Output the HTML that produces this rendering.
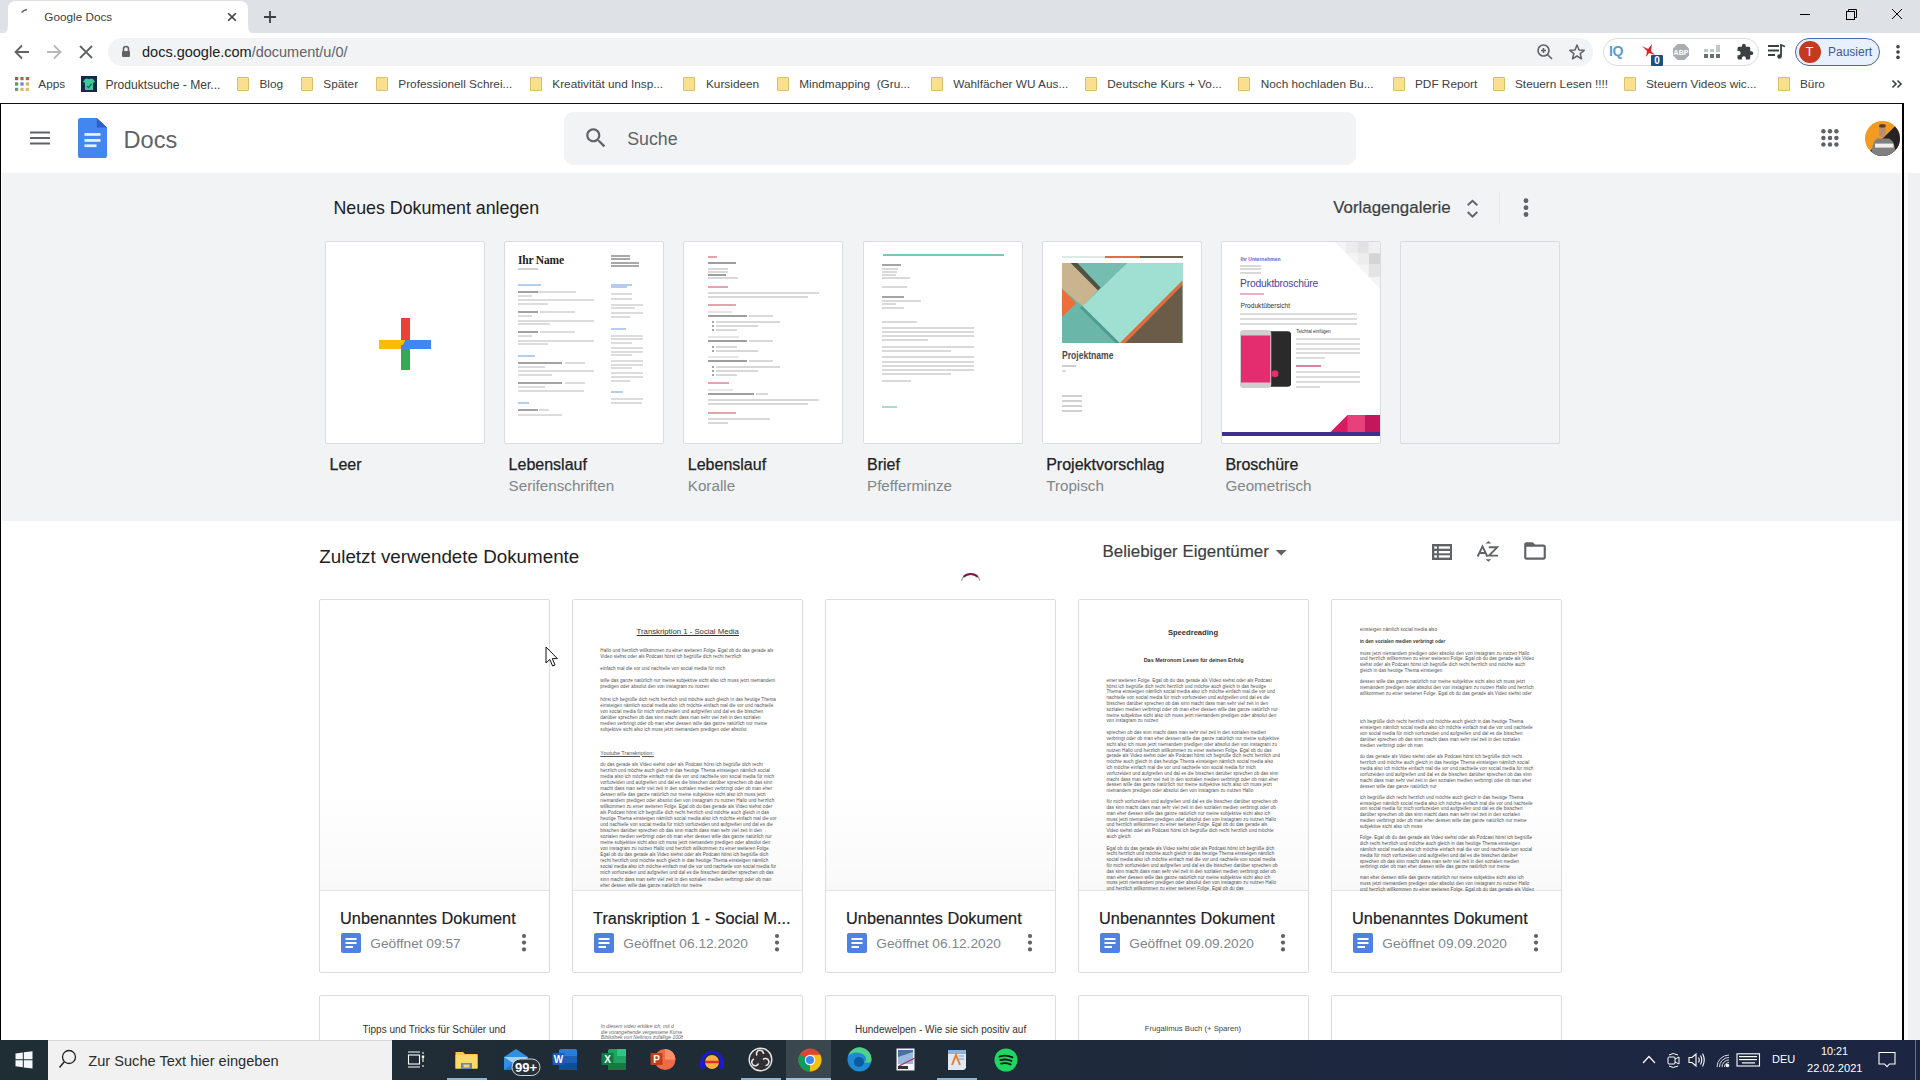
<!DOCTYPE html>
<html><head><meta charset="utf-8">
<style>
*{margin:0;padding:0;box-sizing:border-box}
html,body{width:1920px;height:1080px;overflow:hidden;background:#fff;font-family:"Liberation Sans",sans-serif;position:relative}
.a{position:absolute}
.t{position:absolute;white-space:nowrap;line-height:1}
#tabbar{left:0;top:0;width:1920px;height:33px;background:#dee1e6}
#tab{left:8px;top:0px;width:240px;height:34px;background:#fff;border-radius:8px 8px 0 0}
#toolbar{left:0;top:33px;width:1920px;height:36px;background:#fff}
#omni{left:108px;top:38px;width:1485px;height:28px;background:#f1f3f4;border-radius:14px}
#bmbar{left:0;top:69px;width:1920px;height:34px;background:#fff}
.bm{color:#3c4043;font-size:11.8px;top:78.7px}
.fold{position:absolute;top:77px;width:12px;height:14px;background:#f9e08f;border:1px solid #d9bf68;border-radius:1px}
#frame{left:0;top:102.6px;width:1904px;height:938px;border-top:1.4px solid #111;border-left:1px solid #000;border-right:2px solid #000;background:#fff}
#scroll{left:1904px;top:173px;width:16px;height:867px;background:#eff1f3;border-left:4px solid #fbfbfb}
#gray{left:2px;top:173px;width:1899px;height:348px;background:#f1f3f4}
.tc{position:absolute;top:241px;width:160px;height:203px;background:#fff;border:1px solid #dadce0;border-radius:2px;overflow:hidden}
.tt{font-size:16px;color:#202124;top:457.2px;-webkit-text-stroke:0.25px #202124}
.ts{font-size:15.2px;color:#80868b;top:478px}
.dc{position:absolute;top:599px;width:231px;height:374px;background:#fff;border:1px solid #dadce0;border-radius:2px;overflow:hidden}
.dc2{position:absolute;top:995px;width:231px;height:60px;background:#fff;border:1px solid #dadce0;border-radius:2px;overflow:hidden}
#taskbar{left:0;top:1040px;width:1920px;height:40px;background:linear-gradient(90deg,#1d2a33 0%,#1d2935 40%,#1c2540 100%)}
.dtt{font-size:16.3px;color:#202124;top:910.3px;-webkit-text-stroke:0.2px #202124}
.dts{font-size:13.7px;color:#80868b;top:937.4px}
</style></head><body>
<div id="tabbar" class="a"></div>
<svg class="a" style="left:0;top:0" width="260" height="34" viewBox="0 0 260 34"><path d="M0 34 Q8 34 8 26 V9 Q8 1 16 1 H240 Q248 1 248 9 V26 Q248 34 256 34 Z" fill="#fff"/></svg>
<div class="t" style="left:44.3px;top:11.3px;font-size:11.75px;color:#3c4043">Google Docs</div>
<div id="toolbar" class="a"></div>
<div id="omni" class="a"></div>
<div class="t" style="left:142px;top:45px;font-size:14.5px;color:#202124">docs.google.com<span style="color:#5f6368">/document/u/0/</span></div>
<div id="bmbar" class="a"></div>

<!-- tab details -->
<svg class="a" style="left:20px;top:8px" width="10" height="6" viewBox="0 0 10 6"><path d="M1.5 4.5 Q4 2 7 1.5" stroke="#5f6368" stroke-width="1.3" fill="none"/></svg>
<svg class="a" style="left:227px;top:12px" width="10" height="10" viewBox="0 0 10 10"><path d="M1.2 1.2 L8.8 8.8 M8.8 1.2 L1.2 8.8" stroke="#3c4043" stroke-width="1.6"/></svg>
<svg class="a" style="left:263px;top:10px" width="14" height="14" viewBox="0 0 14 14"><path d="M7 1 V13 M1 7 H13" stroke="#3c4043" stroke-width="1.8"/></svg>
<svg class="a" style="left:1799px;top:8px" width="110" height="14" viewBox="0 0 110 14">
 <path d="M1 6.5 H11" stroke="#000" stroke-width="1"/>
 <rect x="47.5" y="3.5" width="8" height="8" fill="none" stroke="#000" stroke-width="1"/>
 <path d="M49.5 3.5 V1.5 H57.5 V9.5 H55.5" fill="none" stroke="#000" stroke-width="1"/>
 <path d="M93 1 L103 11 M103 1 L93 11" stroke="#000" stroke-width="1"/>
</svg>
<!-- toolbar icons -->
<svg class="a" style="left:12px;top:42px" width="20" height="20" viewBox="0 0 20 20"><path d="M17 10 H4 M10 3.5 L3.5 10 L10 16.5" stroke="#5f6368" stroke-width="1.8" fill="none"/></svg>
<svg class="a" style="left:44px;top:42px" width="20" height="20" viewBox="0 0 20 20"><path d="M3 10 H16 M10 3.5 L16.5 10 L10 16.5" stroke="#b5b8bc" stroke-width="1.8" fill="none"/></svg>
<svg class="a" style="left:76px;top:42px" width="20" height="20" viewBox="0 0 20 20"><path d="M4 4 L16 16 M16 4 L4 16" stroke="#5f6368" stroke-width="1.8" fill="none"/></svg>
<svg class="a" style="left:120px;top:45px" width="12" height="13" viewBox="0 0 12 13"><path d="M3.5 6 V4 a2.5 2.5 0 0 1 5 0 V6" stroke="#5f6368" stroke-width="1.6" fill="none"/><rect x="2" y="6" width="8" height="6" rx="1" fill="#5f6368"/></svg>
<svg class="a" style="left:1535px;top:42px" width="20" height="20" viewBox="0 0 20 20"><circle cx="8.5" cy="8.5" r="5.5" stroke="#5f6368" stroke-width="1.6" fill="none"/><path d="M12.5 12.5 L17 17 M8.5 6 V11 M6 8.5 H11" stroke="#5f6368" stroke-width="1.6"/></svg>
<svg class="a" style="left:1568px;top:43px" width="18" height="18" viewBox="0 0 18 18"><path d="M9 2 L11 7 L16.2 7.3 L12.2 10.6 L13.5 15.8 L9 13 L4.5 15.8 L5.8 10.6 L1.8 7.3 L7 7 Z" stroke="#5f6368" stroke-width="1.5" fill="none" stroke-linejoin="round"/></svg>
<div class="a" style="left:1603px;top:38px;width:156px;height:28px;border:1px solid #dadce0;border-radius:14px;background:#fff"></div>
<div class="t" style="left:1609px;top:44px;font-size:14px;font-weight:bold;color:#5a9bd5;letter-spacing:-0.5px">IQ</div>
<svg class="a" style="left:1640px;top:43px" width="18" height="15" viewBox="0 0 18 15"><path d="M2 3 L8 6 L12 1 L11 8 L15 12 L9 10 L6 14 L7 8 Z" fill="#d8232a"/></svg>
<div class="a" style="left:1651px;top:54.5px;width:12px;height:11px;background:#1a5184;border-radius:1px;color:#fff;font-size:10px;font-weight:bold;line-height:11px;text-align:center">0</div>
<svg class="a" style="left:1672px;top:43px" width="18" height="18" viewBox="0 0 18 18"><path d="M5.5 1 H12.5 L17 5.5 V12.5 L12.5 17 H5.5 L1 12.5 V5.5 Z" fill="#a9adb1"/><text x="9" y="12" font-family="Liberation Sans" font-size="7" font-weight="bold" fill="#fff" text-anchor="middle">ABP</text></svg>
<svg class="a" style="left:1704px;top:44px" width="18" height="15" viewBox="0 0 18 15"><rect x="0" y="10" width="4" height="4" fill="#6b6f73"/><rect x="6" y="10" width="4" height="4" fill="#6b6f73"/><rect x="12" y="10" width="4" height="4" fill="#6b6f73"/><rect x="0" y="5" width="4" height="3" fill="#c4c7ca"/><rect x="6" y="5" width="4" height="3" fill="#c4c7ca"/><rect x="12" y="1" width="4" height="7" fill="#c4c7ca"/></svg>
<svg class="a" style="left:1736px;top:43px" width="18" height="18" viewBox="0 0 24 24"><path d="M20.5 11H19V7c0-1.1-.9-2-2-2h-4V3.5C13 2.12 11.88 1 10.5 1S8 2.12 8 3.5V5H4c-1.1 0-2 .9-2 2v3.8h1.5c1.49 0 2.7 1.21 2.7 2.7s-1.21 2.7-2.7 2.7H2V20c0 1.1.9 2 2 2h3.8v-1.5c0-1.49 1.21-2.7 2.7-2.7 1.49 0 2.7 1.21 2.7 2.7V22H17c1.1 0 2-.9 2-2v-4h1.5c1.38 0 2.5-1.12 2.5-2.5S21.88 11 20.5 11z" fill="#3c4043"/></svg>
<svg class="a" style="left:1767px;top:43px" width="20" height="18" viewBox="0 0 20 18"><path d="M1 3 H12 M1 7.5 H12 M1 12 H8" stroke="#3c4043" stroke-width="1.8"/><path d="M14 13 V2 L18 3.5" stroke="#3c4043" stroke-width="1.8" fill="none"/><circle cx="12.5" cy="13.5" r="2.3" fill="#3c4043"/></svg>
<div class="a" style="left:1795px;top:38px;width:85px;height:28px;border:1px solid #4a67a8;border-radius:14px;background:#e8f0fe"></div>
<div class="a" style="left:1798.5px;top:41px;width:22px;height:22px;border-radius:11px;background:#c53a1f;color:#fff;font-size:13px;line-height:22px;text-align:center">T</div>
<div class="t bm" style="left:1828px;top:46px;color:#3b5998;font-size:12px">Pausiert</div>
<svg class="a" style="left:1894px;top:44px" width="8" height="16" viewBox="0 0 8 16"><circle cx="4" cy="2.8" r="1.8" fill="#3c4043"/><circle cx="4" cy="8" r="1.8" fill="#3c4043"/><circle cx="4" cy="13.4" r="1.8" fill="#3c4043"/></svg>
<!-- bookmarks -->
<svg class="a" style="left:15px;top:77px" width="14" height="14" viewBox="0 0 14 14">
<rect x="0" y="0" width="3.2" height="3.2" fill="#b5504a"/><rect x="5.4" y="0" width="3.2" height="3.2" fill="#c25b4f"/><rect x="10.8" y="0" width="3.2" height="3.2" fill="#c8574b"/>
<rect x="0" y="5.4" width="3.2" height="3.2" fill="#5a9467"/><rect x="5.4" y="5.4" width="3.2" height="3.2" fill="#5c8cc6"/><rect x="10.8" y="5.4" width="3.2" height="3.2" fill="#d1b15e"/>
<rect x="0" y="10.8" width="3.2" height="3.2" fill="#6f9b70"/><rect x="5.4" y="10.8" width="3.2" height="3.2" fill="#d6ba62"/><rect x="10.8" y="10.8" width="3.2" height="3.2" fill="#d7c26b"/>
</svg>
<div class="t bm" style="left:38.3px">Apps</div>
<div class="a" style="left:81px;top:76px;width:16px;height:16px;background:#0f2a4a"></div>
<svg class="a" style="left:81px;top:76px" width="16" height="16" viewBox="0 0 16 16"><path d="M4 3 L6.5 2.5 Q8 4 9.5 2.5 L12 3 L14 6 L12 7 V14 H4 V7 L2 6 Z" fill="#3fc99b"/><path d="M6 10 L7.5 11.5 L10.5 8" stroke="#1d6b55" stroke-width="1.2" fill="none"/></svg>

<div class="t bm" style="left:105.5px;font-size:12.1px">Produktsuche - Mer...</div>
<div class="fold" style="left:236.7px"></div>
<div class="t bm" style="left:259.4px">Blog</div>
<div class="fold" style="left:301.0px"></div>
<div class="t bm" style="left:323.3px">Später</div>
<div class="fold" style="left:376.0px"></div>
<div class="t bm" style="left:398.3px">Professionell Schrei...</div>
<div class="fold" style="left:530.0px"></div>
<div class="t bm" style="left:552.3px">Kreativität und Insp...</div>
<div class="fold" style="left:683.3px"></div>
<div class="t bm" style="left:706.0px">Kursideen</div>
<div class="fold" style="left:776.7px"></div>
<div class="t bm" style="left:799.3px">Mindmapping&nbsp; (Gru...</div>
<div class="fold" style="left:930.7px"></div>
<div class="t bm" style="left:953.3px">Wahlfächer WU Aus...</div>
<div class="fold" style="left:1085.0px"></div>
<div class="t bm" style="left:1107.3px">Deutsche Kurs + Vo...</div>
<div class="fold" style="left:1238.3px"></div>
<div class="t bm" style="left:1260.7px">Noch hochladen Bu...</div>
<div class="fold" style="left:1392.7px"></div>
<div class="t bm" style="left:1415.0px">PDF Report</div>
<div class="fold" style="left:1492.7px"></div>
<div class="t bm" style="left:1515.0px">Steuern Lesen !!!!</div>
<div class="fold" style="left:1624.0px"></div>
<div class="t bm" style="left:1646.0px">Steuern Videos wic...</div>
<div class="fold" style="left:1777.7px"></div>
<div class="t bm" style="left:1800.0px">Büro</div>
<svg class="a" style="left:1891px;top:79px" width="12" height="10" viewBox="0 0 12 10"><path d="M1.5 1.5 L5 5 L1.5 8.5 M6.5 1.5 L10 5 L6.5 8.5" stroke="#3c4043" stroke-width="1.6" fill="none"/></svg>

<div id="frame" class="a"></div>
<div id="scroll" class="a"></div>
<div id="gray" class="a"></div>

<!-- header -->
<svg class="a" style="left:29px;top:129px" width="22" height="18" viewBox="0 0 22 18"><path d="M1 3.5 H21 M1 9 H21 M1 14.5 H21" stroke="#5f6368" stroke-width="2"/></svg>
<svg class="a" style="left:77.5px;top:118px" width="29" height="40" viewBox="0 0 29 40">
 <path d="M2.6 0 H18.8 L29 9.6 V37.4 a2.6 2.6 0 0 1 -2.6 2.6 H2.6 a2.6 2.6 0 0 1 -2.6 -2.6 V2.6 a2.6 2.6 0 0 1 2.6 -2.6 Z" fill="#4486f0"/>
 <path d="M18.8 0 L29 9.6 H18.8 Z" fill="#2c5fc9"/>
 <rect x="6.5" y="15.1" width="16" height="2.7" fill="#e6f4ff"/>
 <rect x="6.5" y="21.1" width="16" height="2.7" fill="#e6f4ff"/>
 <rect x="6.5" y="26.4" width="12" height="2.7" fill="#e6f4ff"/>
</svg>
<div class="t" style="left:123.5px;top:128.5px;font-size:23.6px;color:#5f6368">Docs</div>
<div class="a" style="left:564px;top:112px;width:792px;height:53px;background:#f1f3f4;border-radius:9px"></div>
<div class="t" style="left:627.2px;top:130.8px;font-size:17.8px;color:#5f6368">Suche</div>
<svg class="a" style="left:582.7px;top:124.7px" width="26" height="26" viewBox="0 0 24 24"><path d="M15.5 14h-.79l-.28-.27C15.41 12.59 16 11.11 16 9.5 16 5.91 13.09 3 9.5 3S3 5.91 3 9.5 5.91 16 9.5 16c1.61 0 3.09-.59 4.23-1.57l.27.28v.79l5 4.99L20.49 19l-4.99-5zm-6 0C7.01 14 5 11.99 5 9.5S7.01 5 9.5 5 14 7.01 14 9.5 11.99 14 9.5 14z" fill="#5f6368"/></svg>
<svg class="a" style="left:1818px;top:126px" width="24" height="24" viewBox="0 0 24 24"><g fill="#5f6368"><circle cx="5.4" cy="5.3" r="2.25"/><circle cx="12" cy="5.3" r="2.25"/><circle cx="18.4" cy="5.3" r="2.25"/><circle cx="5.4" cy="12" r="2.25"/><circle cx="12" cy="12" r="2.25"/><circle cx="18.4" cy="12" r="2.25"/><circle cx="5.4" cy="18.4" r="2.25"/><circle cx="12" cy="18.4" r="2.25"/><circle cx="18.4" cy="18.4" r="2.25"/></g></svg>
<svg class="a" style="left:1865px;top:121px" width="35" height="35" viewBox="0 0 35 35">
 <defs><clipPath id="av"><circle cx="17.5" cy="17.5" r="17.5"/></clipPath></defs>
 <g clip-path="url(#av)">
  <rect width="35" height="35" fill="#f39a22"/>
  <path d="M35.2 0 V35 H0 Z" fill="#262422"/>
  <path d="M6 35 Q7 21 12 17.5 L24 17.5 Q30 20 31 35 Z" fill="#7f8082"/>
  <rect x="14.2" y="4.5" width="6.4" height="11.5" rx="3" fill="#b98d70"/>
  <rect x="14" y="3.2" width="6.8" height="3.4" rx="1.7" fill="#5a3d28"/>
  <rect x="10" y="22.6" width="18.5" height="4" fill="#f1eeea"/>
 </g>
</svg>

<!-- templates -->
<div class="t" style="left:333.5px;top:199.8px;font-size:17.8px;color:#202124">Neues Dokument anlegen</div>
<div class="t" style="left:1333.2px;top:199.8px;font-size:16.9px;color:#3c4043;-webkit-text-stroke:0.2px #3c4043">Vorlagengalerie</div>

<svg class="a" style="left:1464px;top:198px" width="17" height="22" viewBox="0 0 17 22"><path d="M3.7 7.3 L8.5 2.8 L13.3 7.3 M3.7 14 L8.5 18.6 L13.3 14" stroke="#5f6368" stroke-width="1.9" fill="none"/></svg>
<div class="a" style="left:1499px;top:192px;width:1px;height:32px;background:#e6e8eb"></div>
<svg class="a" style="left:1521px;top:196px" width="10" height="23" viewBox="0 0 10 23"><g fill="#5f6368"><circle cx="5" cy="4.7" r="2.4"/><circle cx="5" cy="11.7" r="2.4"/><circle cx="5" cy="18.5" r="2.4"/></g></svg>
<div class="tc" style="left:325px"></div>
<div class="tc" style="left:504px"></div>
<div class="tc" style="left:683px"></div>
<div class="tc" style="left:863px"></div>
<div class="tc" style="left:1042px"></div>
<div class="tc" style="left:1221px"></div>
<div class="tc" style="left:1400px;background:#f1f3f4"></div>

<!--THUMBS-->
<div class="a" style="left:400.5px;top:318px;width:9px;height:26px;background:#ea4335"></div>
<div class="a" style="left:379px;top:340px;width:26px;height:9px;background:#fbbc04"></div>
<div class="a" style="left:400.5px;top:345px;width:9px;height:25px;background:#34a853"></div>
<svg class="a" style="left:400px;top:339px" width="32" height="11" viewBox="0 0 32 11"><path d="M5.5 1 H31 V10 H0.5 Z" fill="#4285f4"/></svg>
<div class="t" style="left:518.0px;top:255.0px;font-family:'Liberation Serif';font-weight:bold;font-size:11.5px;color:#222;letter-spacing:-0.2px">Ihr Name</div>
<div class="a" style="left:518px;top:268px;width:20px;height:2px;background:#d0d0d0"></div>
<div class="a" style="left:611px;top:255px;width:19px;height:2px;background:#a8a8a8"></div>
<div class="a" style="left:611px;top:258px;width:19px;height:2px;background:#a8a8a8"></div>
<div class="a" style="left:611px;top:262px;width:28px;height:2px;background:#a8a8a8"></div>
<div class="a" style="left:611px;top:265px;width:28px;height:2px;background:#a8a8a8"></div>
<div class="a" style="left:518px;top:284px;width:23px;height:2px;background:#b5cbf0"></div>
<div class="a" style="left:518px;top:291px;width:20px;height:2px;background:#a3a3a3"></div>
<div class="a" style="left:538px;top:291px;width:38px;height:2px;background:#dcdcdc"></div>
<div class="a" style="left:518px;top:295px;width:14px;height:2px;background:#dcdcdc"></div>
<div class="a" style="left:518px;top:299px;width:76px;height:2px;background:#dcdcdc"></div>
<div class="a" style="left:518px;top:303px;width:30px;height:2px;background:#dcdcdc"></div>
<div class="a" style="left:518px;top:311px;width:20px;height:2px;background:#a3a3a3"></div>
<div class="a" style="left:540px;top:311px;width:35px;height:2px;background:#dcdcdc"></div>
<div class="a" style="left:518px;top:315px;width:14px;height:2px;background:#dcdcdc"></div>
<div class="a" style="left:518px;top:320px;width:76px;height:2px;background:#dcdcdc"></div>
<div class="a" style="left:518px;top:323px;width:32px;height:2px;background:#dcdcdc"></div>
<div class="a" style="left:518px;top:331px;width:20px;height:2px;background:#a3a3a3"></div>
<div class="a" style="left:540px;top:331px;width:35px;height:2px;background:#dcdcdc"></div>
<div class="a" style="left:518px;top:335px;width:14px;height:2px;background:#dcdcdc"></div>
<div class="a" style="left:518px;top:340px;width:76px;height:2px;background:#dcdcdc"></div>
<div class="a" style="left:518px;top:343px;width:30px;height:2px;background:#dcdcdc"></div>
<div class="a" style="left:518px;top:355px;width:17px;height:2px;background:#b5cbf0"></div>
<div class="a" style="left:518px;top:362px;width:44px;height:2px;background:#a3a3a3"></div>
<div class="a" style="left:565px;top:362px;width:20px;height:2px;background:#dcdcdc"></div>
<div class="a" style="left:518px;top:366px;width:27px;height:2px;background:#dcdcdc"></div>
<div class="a" style="left:518px;top:370px;width:76px;height:2px;background:#dcdcdc"></div>
<div class="a" style="left:518px;top:374px;width:34px;height:2px;background:#dcdcdc"></div>
<div class="a" style="left:518px;top:382px;width:44px;height:2px;background:#a3a3a3"></div>
<div class="a" style="left:565px;top:382px;width:20px;height:2px;background:#dcdcdc"></div>
<div class="a" style="left:518px;top:386px;width:27px;height:2px;background:#dcdcdc"></div>
<div class="a" style="left:518px;top:390px;width:66px;height:2px;background:#dcdcdc"></div>
<div class="a" style="left:518px;top:402px;width:11px;height:2px;background:#b5cbf0"></div>
<div class="a" style="left:518px;top:409px;width:20px;height:2px;background:#a3a3a3"></div>
<div class="a" style="left:539px;top:409px;width:10px;height:2px;background:#dcdcdc"></div>
<div class="a" style="left:518px;top:414px;width:44px;height:2px;background:#dcdcdc"></div>
<div class="a" style="left:611px;top:284px;width:21px;height:2px;background:#b5cbf0"></div>
<div class="a" style="left:611px;top:286px;width:16px;height:2px;background:#b5cbf0"></div>
<div class="a" style="left:611px;top:293px;width:21px;height:2px;background:#dcdcdc"></div>
<div class="a" style="left:611px;top:298px;width:21px;height:2px;background:#dcdcdc"></div>
<div class="a" style="left:611px;top:304px;width:32px;height:2px;background:#dcdcdc"></div>
<div class="a" style="left:611px;top:307px;width:24px;height:2px;background:#dcdcdc"></div>
<div class="a" style="left:611px;top:312px;width:32px;height:2px;background:#dcdcdc"></div>
<div class="a" style="left:611px;top:316px;width:19px;height:2px;background:#dcdcdc"></div>
<div class="a" style="left:611px;top:328px;width:15px;height:2px;background:#b5cbf0"></div>
<div class="a" style="left:611px;top:335px;width:32px;height:2px;background:#dcdcdc"></div>
<div class="a" style="left:611px;top:338px;width:32px;height:2px;background:#dcdcdc"></div>
<div class="a" style="left:611px;top:342px;width:21px;height:2px;background:#dcdcdc"></div>
<div class="a" style="left:611px;top:347px;width:32px;height:2px;background:#dcdcdc"></div>
<div class="a" style="left:611px;top:351px;width:32px;height:2px;background:#dcdcdc"></div>
<div class="a" style="left:611px;top:354px;width:21px;height:2px;background:#dcdcdc"></div>
<div class="a" style="left:611px;top:360px;width:32px;height:2px;background:#dcdcdc"></div>
<div class="a" style="left:611px;top:364px;width:32px;height:2px;background:#dcdcdc"></div>
<div class="a" style="left:611px;top:367px;width:21px;height:2px;background:#dcdcdc"></div>
<div class="a" style="left:611px;top:372px;width:32px;height:2px;background:#dcdcdc"></div>
<div class="a" style="left:611px;top:376px;width:32px;height:2px;background:#dcdcdc"></div>
<div class="a" style="left:611px;top:380px;width:19px;height:2px;background:#dcdcdc"></div>
<div class="a" style="left:611px;top:391px;width:12px;height:2px;background:#b5cbf0"></div>
<div class="a" style="left:611px;top:398px;width:32px;height:2px;background:#dcdcdc"></div>
<div class="a" style="left:611px;top:402px;width:31px;height:2px;background:#dcdcdc"></div>
<div class="a" style="left:708px;top:256px;width:9px;height:2px;background:#e6a3ad"></div>
<div class="a" style="left:708px;top:262px;width:28px;height:2px;background:#9e9e9e"></div>
<div class="a" style="left:708px;top:268px;width:20px;height:2px;background:#d8d8d8"></div>
<div class="a" style="left:708px;top:271px;width:20px;height:2px;background:#d8d8d8"></div>
<div class="a" style="left:708px;top:274px;width:18px;height:2px;background:#9e9e9e"></div>
<div class="a" style="left:708px;top:277px;width:30px;height:2px;background:#d8d8d8"></div>
<div class="a" style="left:708px;top:286px;width:20px;height:2px;background:#e6a3ad"></div>
<div class="a" style="left:708px;top:292px;width:111px;height:2px;background:#d8d8d8"></div>
<div class="a" style="left:708px;top:296px;width:100px;height:2px;background:#d8d8d8"></div>
<div class="a" style="left:708px;top:304px;width:28px;height:2px;background:#e6a3ad"></div>
<div class="a" style="left:708px;top:311px;width:24px;height:2px;background:#e6e6e6"></div>
<div class="a" style="left:708px;top:315px;width:39px;height:2px;background:#9e9e9e"></div>
<div class="a" style="left:749px;top:315px;width:24px;height:2px;background:#d8d8d8"></div>
<div class="a" style="left:716px;top:321px;width:64px;height:2px;background:#d8d8d8"></div>
<div class="a" style="left:716px;top:325px;width:42px;height:2px;background:#d8d8d8"></div>
<div class="a" style="left:716px;top:329px;width:21px;height:2px;background:#d8d8d8"></div>
<div class="a" style="left:708px;top:336px;width:31px;height:2px;background:#e6e6e6"></div>
<div class="a" style="left:708px;top:340px;width:39px;height:2px;background:#9e9e9e"></div>
<div class="a" style="left:749px;top:340px;width:24px;height:2px;background:#d8d8d8"></div>
<div class="a" style="left:716px;top:346px;width:21px;height:2px;background:#d8d8d8"></div>
<div class="a" style="left:716px;top:350px;width:42px;height:2px;background:#d8d8d8"></div>
<div class="a" style="left:708px;top:356px;width:31px;height:2px;background:#e6e6e6"></div>
<div class="a" style="left:708px;top:360px;width:39px;height:2px;background:#9e9e9e"></div>
<div class="a" style="left:749px;top:360px;width:24px;height:2px;background:#d8d8d8"></div>
<div class="a" style="left:716px;top:366px;width:64px;height:2px;background:#d8d8d8"></div>
<div class="a" style="left:716px;top:370px;width:42px;height:2px;background:#d8d8d8"></div>
<div class="a" style="left:716px;top:374px;width:21px;height:2px;background:#d8d8d8"></div>
<div class="a" style="left:708px;top:382px;width:21px;height:2px;background:#e6a3ad"></div>
<div class="a" style="left:708px;top:389px;width:25px;height:2px;background:#e6e6e6"></div>
<div class="a" style="left:708px;top:393px;width:46px;height:2px;background:#9e9e9e"></div>
<div class="a" style="left:756px;top:393px;width:12px;height:2px;background:#d8d8d8"></div>
<div class="a" style="left:708px;top:399px;width:111px;height:2px;background:#d8d8d8"></div>
<div class="a" style="left:708px;top:403px;width:100px;height:2px;background:#d8d8d8"></div>
<div class="a" style="left:708px;top:412px;width:28px;height:2px;background:#e6a3ad"></div>
<div class="a" style="left:708px;top:418px;width:62px;height:2px;background:#d8d8d8"></div>
<div class="a" style="left:708px;top:422px;width:20px;height:2px;background:#d8d8d8"></div>
<div class="a" style="left:712px;top:321px;width:2px;height:2px;background:#a5a5a5"></div>
<div class="a" style="left:712px;top:325px;width:2px;height:2px;background:#a5a5a5"></div>
<div class="a" style="left:712px;top:329px;width:2px;height:2px;background:#a5a5a5"></div>
<div class="a" style="left:712px;top:346px;width:2px;height:2px;background:#a5a5a5"></div>
<div class="a" style="left:712px;top:350px;width:2px;height:2px;background:#a5a5a5"></div>
<div class="a" style="left:712px;top:366px;width:2px;height:2px;background:#a5a5a5"></div>
<div class="a" style="left:712px;top:370px;width:2px;height:2px;background:#a5a5a5"></div>
<div class="a" style="left:712px;top:374px;width:2px;height:2px;background:#a5a5a5"></div>
<div class="a" style="left:882.50px;top:254.20px;width:121.25px;height:1.6px;background:#7cc7b5"></div>
<div class="a" style="left:882px;top:264px;width:19px;height:2px;background:#a5a5a5"></div>
<div class="a" style="left:882px;top:268px;width:16px;height:2px;background:#d9d9d9"></div>
<div class="a" style="left:882px;top:271px;width:15px;height:2px;background:#d9d9d9"></div>
<div class="a" style="left:882px;top:274px;width:14px;height:2px;background:#d9d9d9"></div>
<div class="a" style="left:882px;top:277px;width:28px;height:2px;background:#d9d9d9"></div>
<div class="a" style="left:882px;top:286px;width:25px;height:2px;background:#d9d9d9"></div>
<div class="a" style="left:882px;top:296px;width:22px;height:2px;background:#a5a5a5"></div>
<div class="a" style="left:882px;top:300px;width:39px;height:2px;background:#d9d9d9"></div>
<div class="a" style="left:882px;top:303px;width:14px;height:2px;background:#d9d9d9"></div>
<div class="a" style="left:882px;top:307px;width:22px;height:2px;background:#d9d9d9"></div>
<div class="a" style="left:882px;top:321px;width:35px;height:2px;background:#d9d9d9"></div>
<div class="a" style="left:882px;top:327px;width:92px;height:2px;background:#d9d9d9"></div>
<div class="a" style="left:882px;top:331px;width:92px;height:2px;background:#d9d9d9"></div>
<div class="a" style="left:882px;top:335px;width:92px;height:2px;background:#d9d9d9"></div>
<div class="a" style="left:882px;top:339px;width:46px;height:2px;background:#d9d9d9"></div>
<div class="a" style="left:882px;top:346px;width:92px;height:2px;background:#d9d9d9"></div>
<div class="a" style="left:882px;top:350px;width:69px;height:2px;background:#d9d9d9"></div>
<div class="a" style="left:882px;top:356px;width:92px;height:2px;background:#d9d9d9"></div>
<div class="a" style="left:882px;top:361px;width:92px;height:2px;background:#d9d9d9"></div>
<div class="a" style="left:882px;top:365px;width:92px;height:2px;background:#d9d9d9"></div>
<div class="a" style="left:882px;top:369px;width:92px;height:2px;background:#d9d9d9"></div>
<div class="a" style="left:882px;top:373px;width:69px;height:2px;background:#d9d9d9"></div>
<div class="a" style="left:882px;top:380px;width:29px;height:2px;background:#d9d9d9"></div>
<div class="a" style="left:882px;top:406px;width:15px;height:2px;background:#a8dccd"></div>
<div class="a" style="left:1062px;top:256px;width:43px;height:2px;background:#dde9e6"></div>
<div class="a" style="left:1105.00px;top:256.25px;width:35.00px;height:1.5px;background:#e07040"></div>
<div class="a" style="left:1140.00px;top:256.25px;width:42.50px;height:1.5px;background:#6d5e4d"></div>
<svg class="a" style="left:1062.00px;top:262.50px" width="120.50" height="80.00" viewBox="0 0 482 320" preserveAspectRatio="none">
<rect width="482" height="320" fill="#6ab7aa"/>
<path d="M0 0 H62 L157 95 L82 172 L0 102.5 Z" fill="#c9b48f"/>
<path d="M34.7 0 H62 L157 95 L144 110 Z" fill="#4f5242"/>
<path d="M62 0 H261 L155 99 Z" fill="#74bdb0"/>
<path d="M0 102.5 L57 161 L0 216 Z" fill="#ee6d3a"/>
<path d="M82 172 L232 320 H214 L70 178 Z" fill="#4f9d92"/>
<path d="M261 0 H482 V69.5 L232 320 L82 172 Z" fill="#9fe0d2"/>
<path d="M482 69.5 V88 L254 320 H232 Z" fill="#e36d36"/>
<path d="M482 88 V320 H254 Z" fill="#6b5c4a"/>
</svg>
<div class="t" style="left:1061.5px;top:349.5px;font-size:11px;font-weight:bold;color:#4a4a4a;transform:scaleX(0.78);transform-origin:0 0">Projektname</div>
<div class="a" style="left:1062px;top:365px;width:14px;height:2px;background:#d0d0d0"></div>
<div class="a" style="left:1062px;top:370px;width:4px;height:2px;background:#dadada"></div>
<div class="a" style="left:1062px;top:395px;width:20px;height:2px;background:#d0d0d0"></div>
<div class="a" style="left:1062px;top:400px;width:20px;height:2px;background:#d0d0d0"></div>
<div class="a" style="left:1062px;top:405px;width:20px;height:2px;background:#d0d0d0"></div>
<div class="a" style="left:1062px;top:410px;width:20px;height:2px;background:#d0d0d0"></div>
<svg class="a" style="left:1335.00px;top:242.00px" width="45.25" height="48.00" viewBox="0 0 181 192" preserveAspectRatio="none">
<path d="M0 0 H185 V192 Z" fill="#f4f4f4"/>
<rect x="45" y="0" width="45" height="45" fill="#ececec"/><rect x="90" y="0" width="45" height="45" fill="#e2e2e2"/><rect x="135" y="0" width="50" height="45" fill="#f0f0f0"/>
<rect x="135" y="45" width="50" height="45" fill="#d5d5d5"/><rect x="90" y="45" width="45" height="45" fill="#ededed"/>
<rect x="135" y="90" width="50" height="50" fill="#e4e4e4"/>
</svg>
<div class="t" style="left:1240.5px;top:256.5px;font-size:5px;color:#6a5fc8;font-weight:bold">Ihr Unternehmen</div>
<div class="a" style="left:1240px;top:265px;width:21px;height:2px;background:#d9d9d9"></div>
<div class="a" style="left:1240px;top:268px;width:21px;height:2px;background:#d9d9d9"></div>
<div class="a" style="left:1240px;top:272px;width:21px;height:2px;background:#d9d9d9"></div>
<div class="t" style="left:1240.0px;top:278.8px;font-size:10.3px;color:#4b3f9e;letter-spacing:-0.2px">Produktbroschüre</div>
<div class="a" style="left:1240px;top:293px;width:24px;height:2px;background:#eab0c2"></div>
<div class="t" style="left:1240.5px;top:303.2px;font-size:6.6px;color:#333">Produktübersicht</div>
<div class="a" style="left:1240px;top:313px;width:117px;height:2px;background:#dcdcdc"></div>
<div class="a" style="left:1240px;top:318px;width:117px;height:2px;background:#dcdcdc"></div>
<div class="a" style="left:1240px;top:323px;width:117px;height:2px;background:#dcdcdc"></div>
<svg class="a" style="left:1240.00px;top:330.00px" width="51.25" height="58.00" viewBox="0 0 205 232" preserveAspectRatio="none">
<rect x="100" y="5" width="105" height="222" rx="14" fill="#2a2a2a"/>
<rect x="0" y="0" width="125" height="232" rx="14" fill="#cfcfcf"/>
<rect x="4" y="22" width="117" height="188" fill="#e32d6f"/>
<circle cx="140" cy="175" r="14" fill="#e32d6f"/>
</svg>
<div class="t" style="left:1296.2px;top:330.0px;font-size:4.6px;color:#333">Teichtal einfügen</div>
<div class="a" style="left:1296px;top:338px;width:64px;height:2px;background:#dcdcdc"></div>
<div class="a" style="left:1296px;top:343px;width:64px;height:2px;background:#dcdcdc"></div>
<div class="a" style="left:1296px;top:348px;width:64px;height:2px;background:#dcdcdc"></div>
<div class="a" style="left:1296px;top:352px;width:64px;height:2px;background:#dcdcdc"></div>
<div class="a" style="left:1296px;top:357px;width:29px;height:2px;background:#dcdcdc"></div>
<div class="a" style="left:1296px;top:365px;width:25px;height:2px;background:#dd7fa1"></div>
<div class="a" style="left:1296px;top:371px;width:64px;height:2px;background:#dcdcdc"></div>
<div class="a" style="left:1296px;top:376px;width:64px;height:2px;background:#dcdcdc"></div>
<div class="a" style="left:1296px;top:381px;width:64px;height:2px;background:#dcdcdc"></div>
<div class="a" style="left:1296px;top:386px;width:24px;height:2px;background:#dcdcdc"></div>
<svg class="a" style="left:1330.00px;top:415.00px" width="50.25" height="17.50" viewBox="0 0 201 70" preserveAspectRatio="none">
<path d="M70 0 H205 V70 H0 Z" fill="#d81b60"/><rect x="70" y="0" width="70" height="70" fill="#e8407a"/><rect x="140" y="0" width="65" height="70" fill="#c2185b"/>
</svg>
<div class="a" style="left:1222.00px;top:432.00px;width:158.25px;height:4.3px;background:#3f2f8f"></div>
<!--/THUMBS-->
<div class="t tt" style="left:329.5px">Leer</div>
<div class="t tt" style="left:508.6px">Lebenslauf</div>
<div class="t ts" style="left:508.6px">Serifenschriften</div>
<div class="t tt" style="left:687.8px">Lebenslauf</div>
<div class="t ts" style="left:687.8px">Koralle</div>
<div class="t tt" style="left:867px">Brief</div>
<div class="t ts" style="left:867px">Pfefferminze</div>
<div class="t tt" style="left:1046.2px">Projektvorschlag</div>
<div class="t ts" style="left:1046.2px">Tropisch</div>
<div class="t tt" style="left:1225.4px">Broschüre</div>
<div class="t ts" style="left:1225.4px">Geometrisch</div>

<!-- recent -->
<div class="t" style="left:319.3px;top:548.3px;font-size:18.8px;color:#202124">Zuletzt verwendete Dokumente</div>
<div class="t" style="left:1102.6px;top:543.5px;font-size:16.9px;color:#3c4043;-webkit-text-stroke:0.2px #3c4043">Beliebiger Eigentümer</div>

<div class="dc" style="left:319px"></div>
<div class="dc" style="left:572px"></div>
<div class="dc" style="left:825px"></div>
<div class="dc" style="left:1078px"></div>
<div class="dc" style="left:1331px"></div>

<!--DOCS-->
<div class="a" style="left:320px;top:890px;width:229px;height:1px;background:#e3e4e6"></div>
<div class="a" style="left:320px;top:790px;width:229px;height:100px;background:linear-gradient(rgba(0,0,0,0),rgba(0,0,0,0.022));z-index:2"></div>
<div class="t dtt" style="left:340.1px">Unbenanntes Dokument</div>
<svg class="a" style="left:341.1px;top:933px" width="20" height="20" viewBox="0 0 20 20"><rect width="20" height="20" rx="2" fill="#4e81e0"/><rect x="4.5" y="5" width="11" height="2" fill="#fff"/><rect x="4.5" y="9" width="11" height="2" fill="#fff"/><rect x="4.5" y="13" width="7.5" height="2" fill="#fff"/></svg>
<div class="t dts" style="left:370.3px">Geöffnet 09:57</div>
<svg class="a" style="left:520.0px;top:932px" width="8" height="22" viewBox="0 0 8 22"><g fill="#5f6368"><circle cx="4" cy="4" r="2.1"/><circle cx="4" cy="10.6" r="2.1"/><circle cx="4" cy="17.4" r="2.1"/></g></svg>
<div class="a" style="left:573px;top:890px;width:229px;height:1px;background:#e3e4e6"></div>
<div class="a" style="left:573px;top:790px;width:229px;height:100px;background:linear-gradient(rgba(0,0,0,0),rgba(0,0,0,0.022));z-index:2"></div>
<div class="t dtt" style="left:593.1px">Transkription 1 - Social M...</div>
<svg class="a" style="left:594.1px;top:933px" width="20" height="20" viewBox="0 0 20 20"><rect width="20" height="20" rx="2" fill="#4e81e0"/><rect x="4.5" y="5" width="11" height="2" fill="#fff"/><rect x="4.5" y="9" width="11" height="2" fill="#fff"/><rect x="4.5" y="13" width="7.5" height="2" fill="#fff"/></svg>
<div class="t dts" style="left:623.3px">Geöffnet 06.12.2020</div>
<svg class="a" style="left:773.0px;top:932px" width="8" height="22" viewBox="0 0 8 22"><g fill="#5f6368"><circle cx="4" cy="4" r="2.1"/><circle cx="4" cy="10.6" r="2.1"/><circle cx="4" cy="17.4" r="2.1"/></g></svg>
<div class="a" style="left:826px;top:890px;width:229px;height:1px;background:#e3e4e6"></div>
<div class="a" style="left:826px;top:790px;width:229px;height:100px;background:linear-gradient(rgba(0,0,0,0),rgba(0,0,0,0.022));z-index:2"></div>
<div class="t dtt" style="left:846.1px">Unbenanntes Dokument</div>
<svg class="a" style="left:847.1px;top:933px" width="20" height="20" viewBox="0 0 20 20"><rect width="20" height="20" rx="2" fill="#4e81e0"/><rect x="4.5" y="5" width="11" height="2" fill="#fff"/><rect x="4.5" y="9" width="11" height="2" fill="#fff"/><rect x="4.5" y="13" width="7.5" height="2" fill="#fff"/></svg>
<div class="t dts" style="left:876.3px">Geöffnet 06.12.2020</div>
<svg class="a" style="left:1026.0px;top:932px" width="8" height="22" viewBox="0 0 8 22"><g fill="#5f6368"><circle cx="4" cy="4" r="2.1"/><circle cx="4" cy="10.6" r="2.1"/><circle cx="4" cy="17.4" r="2.1"/></g></svg>
<div class="a" style="left:1079px;top:890px;width:229px;height:1px;background:#e3e4e6"></div>
<div class="a" style="left:1079px;top:790px;width:229px;height:100px;background:linear-gradient(rgba(0,0,0,0),rgba(0,0,0,0.022));z-index:2"></div>
<div class="t dtt" style="left:1099.1px">Unbenanntes Dokument</div>
<svg class="a" style="left:1100.1px;top:933px" width="20" height="20" viewBox="0 0 20 20"><rect width="20" height="20" rx="2" fill="#4e81e0"/><rect x="4.5" y="5" width="11" height="2" fill="#fff"/><rect x="4.5" y="9" width="11" height="2" fill="#fff"/><rect x="4.5" y="13" width="7.5" height="2" fill="#fff"/></svg>
<div class="t dts" style="left:1129.3px">Geöffnet 09.09.2020</div>
<svg class="a" style="left:1279.0px;top:932px" width="8" height="22" viewBox="0 0 8 22"><g fill="#5f6368"><circle cx="4" cy="4" r="2.1"/><circle cx="4" cy="10.6" r="2.1"/><circle cx="4" cy="17.4" r="2.1"/></g></svg>
<div class="a" style="left:1332px;top:890px;width:229px;height:1px;background:#e3e4e6"></div>
<div class="a" style="left:1332px;top:790px;width:229px;height:100px;background:linear-gradient(rgba(0,0,0,0),rgba(0,0,0,0.022));z-index:2"></div>
<div class="t dtt" style="left:1352.1px">Unbenanntes Dokument</div>
<svg class="a" style="left:1353.1px;top:933px" width="20" height="20" viewBox="0 0 20 20"><rect width="20" height="20" rx="2" fill="#4e81e0"/><rect x="4.5" y="5" width="11" height="2" fill="#fff"/><rect x="4.5" y="9" width="11" height="2" fill="#fff"/><rect x="4.5" y="13" width="7.5" height="2" fill="#fff"/></svg>
<div class="t dts" style="left:1382.3px">Geöffnet 09.09.2020</div>
<svg class="a" style="left:1532.0px;top:932px" width="8" height="22" viewBox="0 0 8 22"><g fill="#5f6368"><circle cx="4" cy="4" r="2.1"/><circle cx="4" cy="10.6" r="2.1"/><circle cx="4" cy="17.4" r="2.1"/></g></svg>
<div class="t" style="left:636.6px;top:628.2px;font-size:7.75px;color:#333;text-decoration:underline">Transkription 1 - Social Media</div>
<div class="a" style="left:600.3px;top:647.79px;width:176.4px;max-height:12.10px;overflow:hidden;font-size:4.6px;line-height:6.05px;letter-spacing:0.08px;color:#505050;">Hallo und herzlich willkommen zu einer weiteren Folge. Egal ob du das gerade als Video siehst oder als Podcast hörst ich begrüße dich recht herzlich</div>
<div class="a" style="left:600.3px;top:666.31px;width:176.4px;max-height:6.05px;overflow:hidden;font-size:4.6px;line-height:6.05px;letter-spacing:0.08px;color:#505050;">einfach mal die vor und nachteile von social media für mich</div>
<div class="a" style="left:600.3px;top:677.85px;width:176.4px;max-height:12.10px;overflow:hidden;font-size:4.6px;line-height:6.05px;letter-spacing:0.08px;color:#505050;">wille das ganze natürlich nur meine subjektive sicht also ich muss jetzt niemandem predigen oder absolut den von instagram zu nutzen</div>
<div class="a" style="left:600.3px;top:696.64px;width:176.4px;max-height:36.30px;overflow:hidden;font-size:4.6px;line-height:6.05px;letter-spacing:0.08px;color:#505050;">hörst ich begrüße dich recht herzlich und möchte auch gleich in das heutige Thema einsteigen nämlich social media also ich möchte einfach mal die vor und nachteile von social media für mich vorfuzeiden und aufgreifen und dal es die bisschen darüber sprechen ob das sinn macht dass man sehr viel zeit in den sozialen medien verbringt oder ob man eher dessen wille das ganze natürlich nur meine subjektive sicht also ich muss jetzt niemandem predigen oder absolut</div>
<div class="a" style="left:600.3px;top:749.5px;font-size:5.4px;line-height:6px;color:#555;text-decoration:underline;white-space:nowrap">Youtube Transkription:</div>
<div class="a" style="left:600.3px;top:761.61px;width:176.4px;max-height:127.05px;overflow:hidden;font-size:4.6px;line-height:6.05px;letter-spacing:0.08px;color:#505050;">du das gerade als Video siehst oder als Podcast hörst ich begrüße dich recht herzlich und möchte auch gleich in das heutige Thema einsteigen nämlich social media also ich möchte einfach mal die vor und nachteile von social media für mich vorfuzeiden und aufgreifen und dal es die bisschen darüber sprechen ob das sinn macht dass man sehr viel zeit in den sozialen medien verbringt oder ob man eher dessen wille das ganze natürlich nur meine subjektive sicht also ich muss jetzt niemandem predigen oder absolut den von instagram zu nutzen Hallo und herzlich willkommen zu einer weiteren Folge. Egal ob du das gerade als Video siehst oder als Podcast hörst ich begrüße dich recht herzlich und möchte auch gleich in das heutige Thema einsteigen nämlich social media also ich möchte einfach mal die vor und nachteile von social media für mich vorfuzeiden und aufgreifen und dal es die bisschen darüber sprechen ob das sinn macht dass man sehr viel zeit in den sozialen medien verbringt oder ob man eher dessen wille das ganze natürlich nur meine subjektive sicht also ich muss jetzt niemandem predigen oder absolut den von instagram zu nutzen Hallo und herzlich willkommen zu einer weiteren Folge. Egal ob du das gerade als Video siehst oder als Podcast hörst ich begrüße dich recht herzlich und möchte auch gleich in das heutige Thema einsteigen nämlich social media also ich möchte einfach mal die vor und nachteile von social media für mich vorfuzeiden und aufgreifen und dal es die bisschen darüber sprechen ob das sinn macht dass man sehr viel zeit in den sozialen medien verbringt oder ob man eher dessen wille das ganze natürlich nur meine</div>
<div class="t" style="left:1167.9px;top:629.0px;font-size:7.6px;color:#333;font-weight:bold">Speedreading</div>
<div class="t" style="left:1143.7px;top:657.7px;font-size:5.45px;color:#333;font-weight:bold">Das Metronom Lesen für deinen Erfolg</div>
<div class="a" style="left:1106.4px;top:677.85px;width:174.0px;max-height:46.40px;overflow:hidden;font-size:4.6px;line-height:5.8px;letter-spacing:0.08px;color:#505050;">einer weiteren Folge. Egal ob du das gerade als Video siehst oder als Podcast hörst ich begrüße dich recht herzlich und möchte auch gleich in das heutige Thema einsteigen nämlich social media also ich möchte einfach mal die vor und nachteile von social media für mich vorfuzeiden und aufgreifen und dal es die bisschen darüber sprechen ob das sinn macht dass man sehr viel zeit in den sozialen medien verbringt oder ob man eher dessen wille das ganze natürlich nur meine subjektive sicht also ich muss jetzt niemandem predigen oder absolut den von instagram zu nutzen</div>
<div class="a" style="left:1106.4px;top:730.20px;width:174.0px;max-height:63.80px;overflow:hidden;font-size:4.6px;line-height:5.8px;letter-spacing:0.08px;color:#505050;">sprechen ob das sinn macht dass man sehr viel zeit in den sozialen medien verbringt oder ob man eher dessen wille das ganze natürlich nur meine subjektive sicht also ich muss jetzt niemandem predigen oder absolut den von instagram zu nutzen Hallo und herzlich willkommen zu einer weiteren Folge. Egal ob du das gerade als Video siehst oder als Podcast hörst ich begrüße dich recht herzlich und möchte auch gleich in das heutige Thema einsteigen nämlich social media also ich möchte einfach mal die vor und nachteile von social media für mich vorfuzeiden und aufgreifen und dal es die bisschen darüber sprechen ob das sinn macht dass man sehr viel zeit in den sozialen medien verbringt oder ob man eher dessen wille das ganze natürlich nur meine subjektive sicht also ich muss jetzt niemandem predigen oder absolut den von instagram zu nutzen Hallo</div>
<div class="a" style="left:1106.4px;top:799.19px;width:174.0px;max-height:40.60px;overflow:hidden;font-size:4.6px;line-height:5.8px;letter-spacing:0.08px;color:#505050;">für mich vorfuzeiden und aufgreifen und dal es die bisschen darüber sprechen ob das sinn macht dass man sehr viel zeit in den sozialen medien verbringt oder ob man eher dessen wille das ganze natürlich nur meine subjektive sicht also ich muss jetzt niemandem predigen oder absolut den von instagram zu nutzen Hallo und herzlich willkommen zu einer weiteren Folge. Egal ob du das gerade als Video siehst oder als Podcast hörst ich begrüße dich recht herzlich und möchte auch gleich</div>
<div class="a" style="left:1106.4px;top:845.64px;width:174.0px;max-height:46.40px;overflow:hidden;font-size:4.6px;line-height:5.8px;letter-spacing:0.08px;color:#505050;">Egal ob du das gerade als Video siehst oder als Podcast hörst ich begrüße dich recht herzlich und möchte auch gleich in das heutige Thema einsteigen nämlich social media also ich möchte einfach mal die vor und nachteile von social media für mich vorfuzeiden und aufgreifen und dal es die bisschen darüber sprechen ob das sinn macht dass man sehr viel zeit in den sozialen medien verbringt oder ob man eher dessen wille das ganze natürlich nur meine subjektive sicht also ich muss jetzt niemandem predigen oder absolut den von instagram zu nutzen Hallo und herzlich willkommen zu einer weiteren Folge. Egal ob du das</div>
<div class="a" style="left:1359.7px;top:627.38px;width:174.5px;max-height:5.80px;overflow:hidden;font-size:4.6px;line-height:5.8px;letter-spacing:0.08px;color:#505050;">einsteigen nämlich social media also</div>
<div class="a" style="left:1359.7px;top:638.93px;width:174.5px;max-height:5.80px;overflow:hidden;font-size:4.6px;line-height:5.8px;letter-spacing:0.08px;color:#333;font-weight:bold;">in den sozialen medien verbringt oder</div>
<div class="a" style="left:1359.7px;top:650.74px;width:174.5px;max-height:23.00px;overflow:hidden;font-size:4.6px;line-height:5.75px;letter-spacing:0.08px;color:#505050;">muss jetzt niemandem predigen oder absolut den von instagram zu nutzen Hallo und herzlich willkommen zu einer weiteren Folge. Egal ob du das gerade als Video siehst oder als Podcast hörst ich begrüße dich recht herzlich und möchte auch gleich in das heutige Thema einsteigen</div>
<div class="a" style="left:1359.7px;top:679.46px;width:174.5px;max-height:23.00px;overflow:hidden;font-size:4.6px;line-height:5.75px;letter-spacing:0.08px;color:#505050;">dessen wille das ganze natürlich nur meine subjektive sicht also ich muss jetzt niemandem predigen oder absolut den von instagram zu nutzen Hallo und herzlich willkommen zu einer weiteren Folge. Egal ob du das gerade als Video siehst oder</div>
<div class="a" style="left:1359.7px;top:719.46px;width:174.5px;max-height:29.50px;overflow:hidden;font-size:4.6px;line-height:5.9px;letter-spacing:0.08px;color:#505050;">ich begrüße dich recht herzlich und möchte auch gleich in das heutige Thema einsteigen nämlich social media also ich möchte einfach mal die vor und nachteile von social media für mich vorfuzeiden und aufgreifen und dal es die bisschen darüber sprechen ob das sinn macht dass man sehr viel zeit in den sozialen medien verbringt oder ob man</div>
<div class="a" style="left:1359.7px;top:754.36px;width:174.5px;max-height:35.40px;overflow:hidden;font-size:4.6px;line-height:5.9px;letter-spacing:0.08px;color:#505050;">du das gerade als Video siehst oder als Podcast hörst ich begrüße dich recht herzlich und möchte auch gleich in das heutige Thema einsteigen nämlich social media also ich möchte einfach mal die vor und nachteile von social media für mich vorfuzeiden und aufgreifen und dal es die bisschen darüber sprechen ob das sinn macht dass man sehr viel zeit in den sozialen medien verbringt oder ob man eher dessen wille das ganze natürlich nur</div>
<div class="a" style="left:1359.7px;top:794.63px;width:174.5px;max-height:35.40px;overflow:hidden;font-size:4.6px;line-height:5.9px;letter-spacing:0.08px;color:#505050;">ich begrüße dich recht herzlich und möchte auch gleich in das heutige Thema einsteigen nämlich social media also ich möchte einfach mal die vor und nachteile von social media für mich vorfuzeiden und aufgreifen und dal es die bisschen darüber sprechen ob das sinn macht dass man sehr viel zeit in den sozialen medien verbringt oder ob man eher dessen wille das ganze natürlich nur meine subjektive sicht also ich muss</div>
<div class="a" style="left:1359.7px;top:834.90px;width:174.5px;max-height:35.40px;overflow:hidden;font-size:4.6px;line-height:5.9px;letter-spacing:0.08px;color:#505050;">Folge. Egal ob du das gerade als Video siehst oder als Podcast hörst ich begrüße dich recht herzlich und möchte auch gleich in das heutige Thema einsteigen nämlich social media also ich möchte einfach mal die vor und nachteile von social media für mich vorfuzeiden und aufgreifen und dal es die bisschen darüber sprechen ob das sinn macht dass man sehr viel zeit in den sozialen medien verbringt oder ob man eher dessen wille das ganze natürlich nur meine</div>
<div class="a" style="left:1359.7px;top:875.17px;width:174.5px;max-height:17.70px;overflow:hidden;font-size:4.6px;line-height:5.9px;letter-spacing:0.08px;color:#505050;">man eher dessen wille das ganze natürlich nur meine subjektive sicht also ich muss jetzt niemandem predigen oder absolut den von instagram zu nutzen Hallo und herzlich willkommen zu einer weiteren Folge. Egal ob du das gerade als Video</div>
<!--/DOCS-->
<div class="dc2" style="left:319px"></div>
<div class="dc2" style="left:572px"></div>
<div class="dc2" style="left:825px"></div>
<div class="dc2" style="left:1078px"></div>
<div class="dc2" style="left:1331px"></div>

<!--EXTRAS-->
<svg class="a" style="left:1268.3px;top:539px" width="26.4" height="26.4" viewBox="0 0 24 24"><path d="M7 10l5 5 5-5z" fill="#5f6368"/></svg>
<svg class="a" style="left:1432px;top:544px" width="21" height="16" viewBox="0 0 21 16"><rect x="0" y="0" width="20" height="16" fill="#5f6368"/>
<rect x="2.3" y="2.4" width="2.6" height="2.3" fill="#fff"/><rect x="6.8" y="2.4" width="11.2" height="2.3" fill="#fff"/>
<rect x="2.3" y="7" width="2.6" height="2.3" fill="#fff"/><rect x="6.8" y="7" width="11.2" height="2.3" fill="#fff"/>
<rect x="2.3" y="11.3" width="2.6" height="2.3" fill="#fff"/><rect x="6.8" y="11.3" width="11.2" height="2.3" fill="#fff"/></svg>
<svg class="a" style="left:1476px;top:540px" width="24" height="23" viewBox="0 0 24 23"><path d="M9.5 3.5 L12.4 1 L15.3 3.5 Z M9.5 19.3 L12.4 21.8 L15.3 19.3 Z" fill="#5f6368"/>
<path d="M1.7 16.5 L6.5 6.4 L11.3 16.5 M3.4 13 H9.6" stroke="#5f6368" stroke-width="1.9" fill="none"/>
<path d="M12.8 7.3 H21.2 L13 15.6 H22" stroke="#5f6368" stroke-width="1.9" fill="none"/></svg>
<svg class="a" style="left:1522.1px;top:538.1px" width="26" height="26" viewBox="0 0 24 24"><path d="M20 6h-8l-2-2H4c-1.1 0-1.99.9-1.99 2L2 18c0 1.1.9 2 2 2h16c1.1 0 2-.9 2-2V8c0-1.1-.9-2-2-2zm0 12H4V8h16v10z" fill="#5f6368"/></svg>
<svg class="a" style="left:958px;top:568px" width="26" height="20" viewBox="0 0 26 20"><path d="M3.3 12.6 A10 10 0 0 1 22.1 12.6" stroke="#8f8f8f" stroke-width="1.3" fill="none" opacity="0.8"/><path d="M5.6 8.9 A10 10 0 0 1 19.8 8.9" stroke="#7a1d40" stroke-width="2" fill="none"/></svg>
<div class="t" style="left:362.6px;top:1024.5px;font-size:10px;color:#333">Tipps und Tricks für Schüler und</div>
<div class="a" style="left:600.8px;top:1023.5px;width:73px;height:5px;overflow:hidden;white-space:nowrap;font-size:5px;line-height:5px;color:#666;font-style:italic">In diesem video erkläre ich, mit der Bibel</div>
<div class="a" style="left:600.8px;top:1029.5px;width:81px;height:5px;overflow:hidden;white-space:nowrap;font-size:5px;line-height:5px;color:#666;font-style:italic">die vorangehende vergessene Kurse sprechen</div>
<div class="a" style="left:600.8px;top:1035.0px;width:82px;height:5px;overflow:hidden;white-space:nowrap;font-size:5px;line-height:5px;color:#666;font-style:italic">Bibliothek von Nelimos zufällige 1008</div>
<div class="t" style="left:855px;top:1024.5px;font-size:10px;color:#333">Hundewelpen - Wie sie sich positiv auf</div>
<div class="t" style="left:1144.7px;top:1024.5px;font-size:7.7px;color:#444">Frugalimus Buch (+ Sparen)</div>
<svg class="a" style="left:545px;top:646px" width="14" height="22" viewBox="0 0 14 22"><path d="M1 1 V17 L4.8 13.4 L7.6 20 L10 19 L7.3 12.6 H12.4 Z" fill="#fff" stroke="#111" stroke-width="1" stroke-linejoin="round"/></svg>
<div class="a" style="left:0;top:1040px;width:1920px;height:40px;background:linear-gradient(90deg,#1f2d35 0%,#1f2c36 45%,#1d2840 70%,#1c2541 100%)"></div>
<svg class="a" style="left:15px;top:1051px" width="18" height="18" viewBox="0 0 18 18"><path d="M0.5 2.5 L7.8 1.5 V8.3 H0.5 Z M8.8 1.3 L17.5 0.2 V8.3 H8.8 Z M0.5 9.3 H7.8 V16.2 L0.5 15.2 Z M8.8 9.3 H17.5 V17.6 L8.8 16.4 Z" fill="#f4f7fa"/></svg>
<div class="a" style="left:48px;top:1040px;width:344px;height:40px;background:#f1f1f1;border-top:1px solid #d6d6d6"></div>
<svg class="a" style="left:58px;top:1048px" width="20" height="22" viewBox="0 0 20 22"><circle cx="11" cy="9" r="6.5" stroke="#222" stroke-width="1.3" fill="none"/><path d="M6.3 13.7 L1.5 19.5" stroke="#222" stroke-width="1.4"/></svg>
<div class="t" style="left:88.3px;top:1053.8px;font-size:14.6px;color:#2b2b2b">Zur Suche Text hier eingeben</div>
<svg class="a" style="left:407px;top:1051px" width="18" height="17" viewBox="0 0 18 17"><g stroke="#fff" stroke-width="1.1" fill="none"><path d="M1 1 H13 M1 16 H13"/><rect x="1.5" y="4" width="11" height="9"/><path d="M16 1 V3 M16 6 V11 M16 14 V16"/></g><rect x="14.8" y="4.5" width="2.4" height="2.4" fill="#fff"/></svg>
<svg class="a" style="left:455px;top:1050px" width="23" height="20" viewBox="0 0 23 20"><path d="M0.5 2 H8 L10 4 H22.5 V18.5 H0.5 Z" fill="#f3c94f"/><rect x="0.5" y="5" width="22" height="13.5" fill="#fbd96a"/><rect x="6" y="13" width="11" height="6" fill="#5c8db8"/><rect x="8.5" y="14.5" width="6" height="3" fill="#f3d36a"/></svg>
<div class="a" style="left:447px;top:1078px;width:40px;height:2px;background:#8fb3d1"></div>
<svg class="a" style="left:503px;top:1048px" width="40" height="29" viewBox="0 0 40 29"><path d="M1 9 L13 1 L25 9 V22 H1 Z" fill="#2f8fe0"/><path d="M1 9 L13 17 L25 9" fill="#9fd0f7"/><path d="M1 22 L13 13 L25 22 Z" fill="#1f74c6"/><rect x="9" y="11" width="28" height="16.5" rx="8.2" fill="#253039" stroke="#cfd6dc" stroke-width="1"/><text x="23" y="24" font-family="Liberation Sans" font-size="13" font-weight="bold" fill="#fff" text-anchor="middle">99+</text></svg>
<svg class="a" style="left:552px;top:1048px" width="26" height="23" viewBox="0 0 26 23"><rect x="7" y="1" width="18" height="21" rx="1.5" fill="#2b7cd3"/><rect x="7" y="8" width="18" height="7" fill="#1e5fb8"/><rect x="7" y="15" width="18" height="7" fill="#124b9b"/><rect x="0.5" y="5" width="12" height="12" rx="1" fill="#185abd"/><text x="6.5" y="14.5" font-family="Liberation Sans" font-size="10" font-weight="bold" fill="#fff" text-anchor="middle">W</text></svg>
<svg class="a" style="left:601px;top:1048px" width="26" height="23" viewBox="0 0 26 23"><rect x="7" y="1" width="18" height="21" rx="1.5" fill="#21a366"/><rect x="16" y="1" width="9" height="7" fill="#33c481"/><rect x="7" y="15" width="18" height="7" fill="#107c41"/><rect x="0.5" y="5" width="12" height="12" rx="1" fill="#107c41"/><text x="6.5" y="14.5" font-family="Liberation Sans" font-size="10" font-weight="bold" fill="#fff" text-anchor="middle">X</text></svg>
<svg class="a" style="left:650px;top:1048px" width="26" height="23" viewBox="0 0 26 23"><circle cx="15" cy="11.5" r="10.5" fill="#ed6c47"/><path d="M15 1 A10.5 10.5 0 0 1 25.5 11.5 H15 Z" fill="#ff8f6b"/><rect x="0.5" y="5" width="12" height="12" rx="1" fill="#c43e1c"/><text x="6.5" y="14.5" font-family="Liberation Sans" font-size="10" font-weight="bold" fill="#fff" text-anchor="middle">P</text></svg>
<svg class="a" style="left:699px;top:1048px" width="26" height="23" viewBox="0 0 26 23"><path d="M3 14 A10 10 0 0 1 23 14" stroke="#1a1ad0" stroke-width="3" fill="none"/><rect x="1" y="12" width="5" height="9" rx="2" fill="#1a1ad0"/><rect x="20" y="12" width="5" height="9" rx="2" fill="#1a1ad0"/><circle cx="13" cy="14" r="7" fill="#f5b041"/><path d="M6 14 H20" stroke="#e03020" stroke-width="2.5"/></svg>
<svg class="a" style="left:748px;top:1047px" width="25" height="25" viewBox="0 0 25 25"><circle cx="12.5" cy="12.5" r="11.3" fill="#302e31" stroke="#e6e6e6" stroke-width="1.4"/><g fill="none" stroke="#e6e6e6" stroke-width="1.6"><path d="M9 8.5 A3.5 3.5 0 1 1 15.5 7"/><path d="M10.5 16.5 A3.5 3.5 0 1 1 6 12"/><path d="M15 12.5 A3.5 3.5 0 1 1 17.5 18.5"/></g></svg>
<div class="a" style="left:741px;top:1078px;width:40px;height:2px;background:#8fb3d1"></div>
<div class="a" style="left:786px;top:1040px;width:45px;height:40px;background:#3b474f"></div>
<div class="a" style="left:786px;top:1078px;width:45px;height:2px;background:#9cc0de"></div>
<svg class="a" style="left:798px;top:1048px" width="24" height="24" viewBox="0 0 24 24"><circle cx="12" cy="12" r="11.5" fill="#db4437"/><path d="M12 12 L2 6.2 A11.5 11.5 0 0 0 12 23.5 Z" fill="#0f9d58"/><path d="M12 12 L12 23.5 A11.5 11.5 0 0 0 22.3 6.8 L12 6.8 Z" fill="#f4c20d"/><circle cx="12" cy="12" r="5.2" fill="#fff"/><circle cx="12" cy="12" r="4.1" fill="#4285f4"/></svg>
<svg class="a" style="left:847px;top:1047px" width="25" height="25" viewBox="0 0 25 25"><circle cx="12.5" cy="12.5" r="12" fill="#1f8ad2"/><path d="M24.5 13 A12 12 0 0 0 1 9 Q6 4 13 6 Q20 8 19 14 Q16 16 12 14 Q24 18 24.5 13 Z" fill="#4fd18b"/><circle cx="12" cy="15" r="5" fill="#0c59a4"/></svg>
<svg class="a" style="left:896px;top:1048px" width="20" height="23" viewBox="0 0 20 23"><rect x="0.5" y="0.5" width="18" height="22" fill="#f2f4f7"/><rect x="2" y="2" width="15" height="14" fill="#4a6ea8"/><path d="M2 9 L17 4 V16 H2 Z" fill="#9bb8df"/><path d="M3 18 L19 10" stroke="#b0305a" stroke-width="1.3"/><rect x="2" y="18" width="10" height="3" fill="#333"/></svg>
<svg class="a" style="left:947px;top:1048px" width="20" height="23" viewBox="0 0 20 23"><path d="M1 2 H17 L19 4 V20 L17 22 H1 Z" fill="#dfe9f5"/><rect x="1" y="2" width="18" height="4" fill="#8bb3dd"/><path d="M5 17 L9 7 L13 17" stroke="#e8822a" stroke-width="2" fill="none"/><path d="M12 8 H17 M12 11 H17" stroke="#7a9cc6" stroke-width="1"/></svg>
<div class="a" style="left:937px;top:1078px;width:40px;height:2px;background:#8fb3d1"></div>
<svg class="a" style="left:994px;top:1048px" width="24" height="24" viewBox="0 0 24 24"><circle cx="12" cy="12" r="11.5" fill="#1ed760"/><path d="M5.5 8.6 Q12 6.5 18.5 9.4 M6.3 12.2 Q12 10.5 17.6 13 M7 15.6 Q12 14.3 16.6 16.4" stroke="#191414" stroke-width="1.8" fill="none" stroke-linecap="round"/></svg>
<svg class="a" style="left:1642px;top:1055px" width="14" height="9" viewBox="0 0 14 9"><path d="M1 8 L7 1.5 L13 8" stroke="#fff" stroke-width="1.2" fill="none"/></svg>
<svg class="a" style="left:1667px;top:1052px" width="13" height="17" viewBox="0 0 13 17"><g stroke="#fff" stroke-width="1" fill="none"><path d="M2 3 Q6 0 11 3 M2 14 Q6 17 11 14"/><rect x="1" y="5" width="7" height="7" rx="1"/><path d="M8 7 L12 5 V12 L8 10"/></g></svg>
<svg class="a" style="left:1688px;top:1052px" width="18" height="16" viewBox="0 0 18 16"><g stroke="#fff" stroke-width="1.1" fill="none"><path d="M1 5.5 H4 L8 2 V14 L4 10.5 H1 Z"/><path d="M10.5 5.5 Q12 8 10.5 10.5 M12.5 3.5 Q15 8 12.5 12.5 M14.5 1.5 Q18 8 14.5 14.5"/></g></svg>
<svg class="a" style="left:1716px;top:1054px" width="14" height="14" viewBox="0 0 14 14"><g stroke="#d8dbe0" stroke-width="1" fill="none"><path d="M1 13 A12 12 0 0 1 13 1 M3.5 13 A9.5 9.5 0 0 1 13 3.5 M6 13 A7 7 0 0 1 13 6 M8.5 13 A4.5 4.5 0 0 1 13 8.5"/></g><circle cx="11.5" cy="11.5" r="1.8" fill="#fff"/></svg>
<svg class="a" style="left:1736px;top:1053px" width="25" height="14" viewBox="0 0 25 14"><rect x="1" y="0.8" width="22.5" height="12.2" stroke="#fff" stroke-width="1.1" fill="none"/><g fill="#fff"><rect x="3" y="3" width="18" height="1.2"/><rect x="3" y="6" width="18" height="1.2"/><rect x="6" y="9.3" width="13" height="1.2"/></g></svg>
<div class="t" style="left:1772px;top:1054px;font-size:11px;color:#fff">DEU</div>
<div class="t" style="left:1821px;top:1045.5px;font-size:10.8px;color:#fff">10:21</div>
<div class="t" style="left:1807px;top:1063.3px;font-size:11.1px;color:#fff">22.02.2021</div>
<svg class="a" style="left:1878px;top:1051px" width="18" height="18" viewBox="0 0 18 18"><path d="M1 1.5 H17 V13 H11.5 L9 15.7 L6.5 13 H1 Z" stroke="#fff" stroke-width="1.1" fill="none"/></svg>
<div class="a" style="left:1915px;top:1040px;width:1px;height:40px;background:#6b7285"></div>
<!--/EXTRAS-->
</body></html>
